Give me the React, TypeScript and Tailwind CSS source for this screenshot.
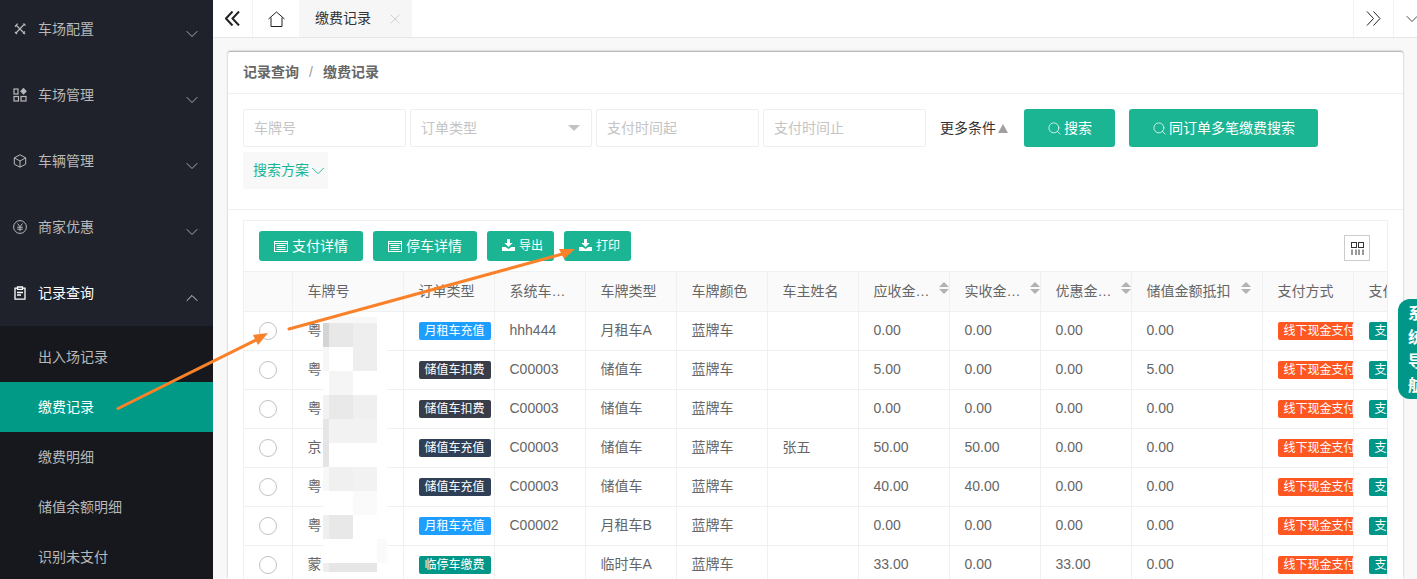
import React from 'react';
import { ChevronDown, ChevronUp, X, Search } from 'lucide-react';

const font = { fontFamily: '"Liberation Sans", "Noto Sans CJK SC", sans-serif' };

const menus = [
  { label: '车场配置', icon: 'tools' },
  { label: '车场管理', icon: 'apps' },
  { label: '车辆管理', icon: 'box' },
  { label: '商家优惠', icon: 'yen' },
];

const subMenus = ['出入场记录', '缴费记录', '缴费明细', '储值余额明细', '识别未支付'];

const MenuIcon = ({ name }: { name: string }) => {
  if (name === 'tools')
    return (
      <svg width="14" height="14" viewBox="0 0 14 14" fill="none" stroke="currentColor" strokeWidth="1.2">
        <path d="M3 3l9 9M2 4.5L4.5 2M4.5 1.5L2 5M11.5 2L2.5 11.5M2 10l2 2M10.5 1.5l2 2M10 11.5l2-2" />
      </svg>
    );
  if (name === 'apps')
    return (
      <svg width="14" height="14" viewBox="0 0 14 14" fill="none" stroke="currentColor" strokeWidth="1.2">
        <rect x="1" y="1" width="4" height="5" />
        <rect x="1" y="8.5" width="4.5" height="4.5" />
        <rect x="8" y="8.5" width="5" height="4.5" />
        <path d="M10.5 .6l2.5 2.6-2.5 2.6L8 3.2z" fill="currentColor" />
      </svg>
    );
  if (name === 'box')
    return (
      <svg width="14" height="14" viewBox="0 0 14 14" fill="none" stroke="currentColor" strokeWidth="1">
        <path d="M7 .8l5.7 3v6.4L7 13.2l-5.7-3V3.8zM1.3 3.8L7 7l5.7-3.2M7 7v6.2" />
      </svg>
    );
  return (
    <svg width="14" height="14" viewBox="0 0 14 14" fill="none" stroke="currentColor" strokeWidth="1">
      <circle cx="7" cy="7" r="6.4" />
      <path d="M4.5 3.5L7 6.8l2.5-3.3M4.2 7.2h5.6M4.2 9.2h5.6M7 6.8v4.4" />
    </svg>
  );
};

const Sidebar = () => (
  <aside className="w-[213px] shrink-0 bg-[#1f222b] overflow-hidden">
    <div className="-mt-[4px]">
      {menus.map((m) => (
        <div key={m.label} className="h-[66px] flex items-center pl-[13px] pr-[11px] text-[#b8b8b8]">
          <span className="w-[25px] flex">
            <MenuIcon name={m.icon} />
          </span>
          <span className="text-[14px] flex-1">{m.label}</span>
          <ChevronDown size={20} strokeWidth={1} className="mt-[10px] text-[#c4c4c4]" />
        </div>
      ))}
      <div className="h-[66px] flex items-center pl-[13px] pr-[11px] text-white">
        <span className="w-[25px] flex">
          <svg width="14" height="14" viewBox="0 0 14 14" fill="none" stroke="currentColor" strokeWidth="1.3">
            <path d="M4 2.2H2v11h10v-11H10M4.5 1h5v2.4h-5zM4 6.5h6M4 9h4" />
          </svg>
        </span>
        <span className="text-[14px] flex-1">记录查询</span>
        <ChevronUp size={20} strokeWidth={1} className="mt-[10px]" />
      </div>
      <div className="bg-[#17181e] pt-[6px]">
        {subMenus.map((s) => (
          <div
            key={s}
            className={`h-[50px] flex items-center pl-[38px] text-[14px] ${
              s === '缴费记录' ? 'bg-[#009a87] text-white' : 'text-[#b8b8b8]'
            }`}
          >
            {s}
          </div>
        ))}
      </div>
    </div>
  </aside>
);

const TopBar = () => (
  <header className="h-[38px] shrink-0 flex bg-white border-b border-[#e6e6e6] text-[#333]">
    <div className="w-[40px] flex items-center justify-center border-r border-[#f2f2f2]">
      <svg width="15" height="15" viewBox="0 0 15 15" fill="none" stroke="#222" strokeWidth="2">
        <path d="M7.5 .5L1 7.5l6.5 7M14 .5L7.5 7.5l6.5 7" />
      </svg>
    </div>
    <div className="w-[46px] flex items-center justify-center">
      <svg width="17" height="16" viewBox="0 0 17 16" fill="none" stroke="#222" strokeWidth="1">
        <path d="M.5 8L8.5 1l8 7M3 6.5v9h11v-9" />
      </svg>
    </div>
    <div className="w-[113px] bg-[#f6f6f6] flex items-center pl-[16px] text-[14px]">
      <span className="flex-1">缴费记录</span>
      <X size={16} strokeWidth={1} className="mr-[9px] text-[#bbb]" />
    </div>
    <div className="flex-1" />
    <div className="w-[40px] flex items-center justify-center border-l border-[#f2f2f2]">
      <svg width="15" height="15" viewBox="0 0 15 15" fill="none" stroke="#222" strokeWidth="1">
        <path d="M1 .5l6.5 7L1 14.5M7.5 .5l6.5 7-6.5 7" />
      </svg>
    </div>
    <div className="w-[24px] flex items-center pl-[8px] border-l border-[#f2f2f2] overflow-hidden">
      <ChevronDown size={20} strokeWidth={1} className="text-[#222] shrink-0" />
    </div>
  </header>
);

const inputClass =
  'h-[38px] rounded-[2px] border border-[#eeeeee] bg-white flex items-center pl-[10px] text-[14px] text-[#c4c4c4]';

const SearchBar = () => (
  <div className="h-[116px] border-b border-[#f0f0f0] pt-[15px] pl-[15px]">
    <div className="flex items-center">
      <div className={`${inputClass} w-[163px]`}>车牌号</div>
      <div className={`${inputClass} w-[182px] ml-[4px] justify-between pr-[11px]`}>
        订单类型
        <span className="w-0 h-0 border-x-[6px] border-x-transparent border-t-[6px] border-t-[#c2c2c2]" />
      </div>
      <div className={`${inputClass} w-[163px] ml-[4px]`}>支付时间起</div>
      <div className={`${inputClass} w-[163px] ml-[4px]`}>支付时间止</div>
      <span className="ml-[14px] w-[84px] text-[14px] text-[#333] whitespace-nowrap flex items-center">
        更多条件
        <span className="ml-[2px] w-0 h-0 border-x-[5px] border-x-transparent border-b-[9px] border-b-[#a0a0a0]" />
      </span>
      <button className="w-[91px] h-[38px] rounded-[3px] bg-[#1bb594] text-white text-[14px] flex items-center justify-center gap-[2px]">
        <Search size={15} strokeWidth={1.2} />
        搜索
      </button>
      <button className="w-[189px] h-[38px] ml-[14px] rounded-[3px] bg-[#1bb594] text-white text-[14px] flex items-center justify-center gap-[2px]">
        <Search size={15} strokeWidth={1.2} />
        同订单多笔缴费搜索
      </button>
    </div>
    <div className="mt-[5px] w-[85px] h-[37px] rounded-[2px] bg-[#f8f8f8] text-[#1bb594] text-[14px] whitespace-nowrap flex items-center pl-[10px]">
      搜索方案
      <ChevronDown size={22} strokeWidth={1} className="-ml-[2px] shrink-0" />
    </div>
  </div>
);

const ListIcon = () => (
  <svg width="14" height="11" viewBox="0 0 14 11" fill="none" stroke="currentColor">
    <rect x=".5" y=".5" width="13" height="10" />
    <path d="M0 2.5h14M2.5 4.5h9M2.5 6.5h9M2.5 8.5h9" />
  </svg>
);

const SaveIcon = () => (
  <svg width="13" height="12" viewBox="0 0 13 12" fill="currentColor" className="-mt-[3px]">
    <path d="M5 0h3v4h2.6L6.5 8 2.4 4H5zM0 8h3.5l3 2 3-2H13v4H0z" />
  </svg>
);

const columns = [
  { title: '', w: 48 },
  { title: '车牌号', w: 111 },
  { title: '订单类型', w: 91 },
  { title: '系统车…', w: 91 },
  { title: '车牌类型', w: 91 },
  { title: '车牌颜色', w: 91 },
  { title: '车主姓名', w: 91 },
  { title: '应收金…', w: 91, sort: 'right-0' },
  { title: '实收金…', w: 91, sort: 'right-0' },
  { title: '优惠金…', w: 91, sort: 'right-0' },
  { title: '储值金额抵扣', w: 131, sort: 'right-[11px]' },
  { title: '支付方式', w: 91 },
  { title: '支付状态', w: 91 },
];

const rows = [
  ['粤', '月租车充值', '#1e9fff', 'hhh444', '月租车A', '', '0.00', '0.00', '0.00', '0.00'],
  ['粤', '储值车扣费', '#393d49', 'C00003', '储值车', '', '5.00', '0.00', '0.00', '5.00'],
  ['粤', '储值车扣费', '#393d49', 'C00003', '储值车', '', '0.00', '0.00', '0.00', '0.00'],
  ['京', '储值车充值', '#2f4056', 'C00003', '储值车', '张五', '50.00', '50.00', '0.00', '0.00'],
  ['粤', '储值车充值', '#2f4056', 'C00003', '储值车', '', '40.00', '40.00', '0.00', '0.00'],
  ['粤', '月租车充值', '#1e9fff', 'C00002', '月租车B', '', '0.00', '0.00', '0.00', '0.00'],
  ['蒙', '临停车缴费', '#009688', '', '临时车A', '', '33.00', '0.00', '33.00', '0.00'],
];

const Tag = ({ color, children }: { color: string; children: React.ReactNode }) => (
  <span
    className="inline-block align-middle h-[18px] leading-[18px] px-[6px] rounded-[2px] text-white text-[12px] whitespace-nowrap"
    style={{ backgroundColor: color }}
  >
    {children}
  </span>
);

const thClass = 'border-r border-b border-[#f0f0f0] h-[39px] p-0 pl-[15px] font-normal text-left whitespace-nowrap overflow-hidden';
const tdClass = 'border-r border-b border-[#f0f0f0] h-[39px] p-0 pl-[15px] whitespace-nowrap overflow-hidden';

const mosaic = [
  ['#ffffff', '#f8f8f8', '#f8f8f8', '#ffffff00'],
  ['#d4d4d4', '#e8e8e8', '#eeeeee', '#ffffff'],
  ['#f6f6f6', '#ffffff', '#eeeeee', '#ffffff'],
  ['#ffffff', '#f5f5f5', '#ffffff', '#ffffff'],
  ['#f2f2f2', '#e9e9e9', '#efefef', '#ffffff'],
  ['#e6e6e6', '#f2f2f2', '#f2f2f2', '#ffffff'],
  ['#e4e4e4', '#ffffff', '#ffffff', '#ffffff'],
  ['#f8f8f8', '#f0f0f0', '#f2f2f2', '#ffffff'],
  ['#ffffff', '#ffffff', '#fafafa', '#ffffff'],
  ['#efefef', '#e8e8e8', '#ffffff', '#ffffff'],
  ['#ffffff', '#ffffff', '#ffffff', '#fafafa'],
  ['#eeeeee', '#e6e6e6', '#e6e6e6', '#ffffff'],
];

const Mosaic = () => (
  <div className="absolute left-[79px] top-[45px] w-[64px] grid grid-cols-[6px_24px_24px_10px] grid-rows-[6px_repeat(10,24px)_9px]">
    {mosaic.flat().map((c, i) => (
      <div key={i} style={{ backgroundColor: c }} />
    ))}
  </div>
);

const DataTable = () => (
  <div className="relative overflow-hidden">
    <table className="table-fixed border-collapse text-[14px] text-[#666] w-[1200px]">
      <colgroup>
        {columns.map((c, i) => (
          <col key={i} style={{ width: c.w }} />
        ))}
      </colgroup>
      <thead>
        <tr className="bg-[#fafafa]">
          {columns.map((c, i) => (
            <th key={i} className={thClass}>
              <div className="flex items-center relative">
                {c.title}
                {c.sort && (
                  <span className={`absolute ${c.sort} top-[1px] flex flex-col gap-[2px]`}>
                    <span className="w-0 h-0 border-x-[5px] border-x-transparent border-b-[5px] border-b-[#b2b2b2]" />
                    <span className="w-0 h-0 border-x-[5px] border-x-transparent border-t-[5px] border-t-[#b2b2b2]" />
                  </span>
                )}
              </div>
            </th>
          ))}
        </tr>
      </thead>
      <tbody>
        {rows.map((r, i) => (
          <tr key={i}>
            <td className={tdClass}>
              <span className="block w-[18px] h-[18px] rounded-full border border-[#c2c2c2]" />
            </td>
            <td className={tdClass}>{r[0]}</td>
            <td className={tdClass}>
              <Tag color={r[2]}>{r[1]}</Tag>
            </td>
            <td className={tdClass}>{r[3]}</td>
            <td className={tdClass}>{r[4]}</td>
            <td className={tdClass}>蓝牌车</td>
            <td className={tdClass}>{r[5]}</td>
            <td className={tdClass}>{r[6]}</td>
            <td className={tdClass}>{r[7]}</td>
            <td className={tdClass}>{r[8]}</td>
            <td className={tdClass}>{r[9]}</td>
            <td className={tdClass}>
              <Tag color="#ff5722">线下现金支付</Tag>
            </td>
            <td className={tdClass}>
              <Tag color="#009688">支付成功</Tag>
            </td>
          </tr>
        ))}
      </tbody>
    </table>
    <Mosaic />
  </div>
);

const toolBtn = 'h-[30px] rounded-[3px] bg-[#1bb594] text-white flex items-center justify-center gap-[4px]';

const TableBox = () => (
  <div className="ml-[15px] mt-[10px] w-[1145px] border-t border-x border-[#f0f0f0]">
    <div className="h-[51px] flex items-center pl-[15px] pr-[17px] border-b border-[#f0f0f0]">
      <button className={`${toolBtn} w-[104px] text-[14px]`}>
        <ListIcon />
        支付详情
      </button>
      <button className={`${toolBtn} w-[104px] ml-[10px] text-[14px]`}>
        <ListIcon />
        停车详情
      </button>
      <button className={`${toolBtn} w-[67px] ml-[10px] pl-[4px] text-[12px]`}>
        <SaveIcon />
        导出
      </button>
      <button className={`${toolBtn} w-[67px] ml-[10px] pl-[4px] text-[12px]`}>
        <SaveIcon />
        打印
      </button>
      <div className="flex-1" />
      <button className="w-[26px] h-[26px] mt-[4px] border border-[#cccccc] flex items-center justify-center text-[#333]">
        <svg width="13" height="13" viewBox="0 0 13 13" fill="none" stroke="currentColor">
          <rect x=".5" y=".5" width="5" height="5" />
          <rect x="7.5" y=".5" width="5" height="5" />
          <path d="M1 7.5V13M5 7.5V13M8 7.5V13M12 7.5V13" />
        </svg>
      </button>
    </div>
    <DataTable />
  </div>
);

const Arrows = () => (
  <svg className="absolute inset-0 pointer-events-none" width="1417" height="579" fill="none">
    <path d="M118 408.5L258 339" stroke="#f9812a" strokeWidth="3" strokeLinecap="round" />
    <path d="M268 333L253 335L258 345z" fill="#f9812a" />
    <path d="M289 329L566 253" stroke="#f9812a" strokeWidth="3" strokeLinecap="round" />
    <path d="M575 249L559 249L564 259z" fill="#f9812a" />
  </svg>
);

const App = () => (
  <div className="relative h-[579px] w-[1417px] flex overflow-hidden bg-[#f8f8f8]" style={font}>
    <Sidebar />
    <main className="flex-1 min-w-0 flex flex-col">
      <TopBar />
      <div className="ml-[15px] mr-[14px] mt-[14px] flex-1 bg-white shadow-[0_-1px_2px_rgba(0,0,0,0.35)] rounded-t-[2px] overflow-hidden">
        <div className="h-[42px] flex items-center pl-[15px] border-b border-[#f0f0f0] text-[14px] font-bold text-[#666]">
          记录查询
          <span className="mx-[10px] font-normal text-[#999]">/</span>
          缴费记录
        </div>
        <SearchBar />
        <TableBox />
      </div>
    </main>
    <Arrows />
    <div className="absolute right-0 top-[299px] w-[19px] h-[100px] rounded-l-[12px] bg-[#009688] overflow-hidden pl-[10px] pt-[3px] text-white text-[16px] leading-[24px] font-bold">
      <div className="w-[16px]">系统导航</div>
    </div>
  </div>
);

export default App;
